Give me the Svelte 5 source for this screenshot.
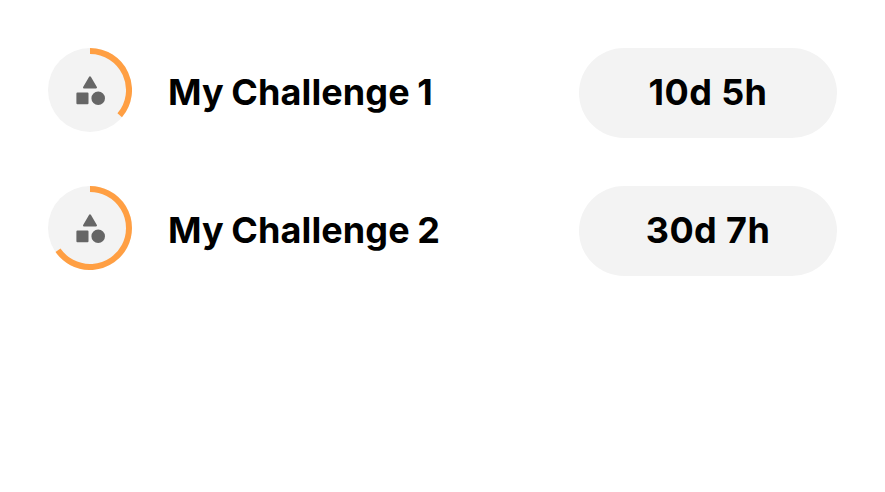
<script>
  const challenges = [
    { name: 'My Challenge 1', left: '10d 5h', arc: 'M42 3A39 39 0 0 1 71.7 67.3' },
    { name: 'My Challenge 2', left: '30d 7h', arc: 'M42 3A39 39 0 1 1 10 64.3' }
  ];
</script>

<main>
  {#each challenges as challenge}
    <div class="row">
      <svg class="progress" viewBox="0 0 84 84" aria-hidden="true">
        <circle cx="42" cy="42" r="42" fill="#f3f3f3" />
        <path d={challenge.arc} fill="none" stroke="#ff9f43" stroke-width="6" />
        <g fill="#666" stroke="#666" stroke-width="2" stroke-linejoin="round">
          <path d="M42 29.3L48 39.5H36Z" />
          <path d="M29.4 45.4H39.5V55.2H29.4Z" />
          <circle cx="50.2" cy="50.2" r="5.8" />
        </g>
      </svg>
      <span class="name">{challenge.name}</span>
      <span class="time">{challenge.left}</span>
    </div>
  {/each}
</main>

<style>
  :global(body) { background: #fff; }
  main {
    box-sizing: border-box;
    width: 885px;
    height: 492px;
    padding: 48px;
    display: flex;
    flex-direction: column;
    gap: 48px;
    font-family: Inter, sans-serif;
    font-size: 36px;
    font-weight: 700;
    line-height: 44px;
    color: #000;
  }
  .row { display: flex; height: 90px; align-items: center; }
  .progress { width: 84px; height: 84px; align-self: flex-start; flex: none; }
  .name {
    margin-left: 36px;
    padding-bottom: 2px;
    flex: 1;
    white-space: nowrap;
    word-spacing: -1.2px;
    letter-spacing: 0.11px;
  }
  .time {
    box-sizing: border-box;
    width: 258px;
    height: 90px;
    padding-bottom: 2px;
    border-radius: 45px;
    background: #f3f3f3;
    display: flex;
    align-items: center;
    justify-content: center;
    letter-spacing: 0.4px;
  }
</style>
